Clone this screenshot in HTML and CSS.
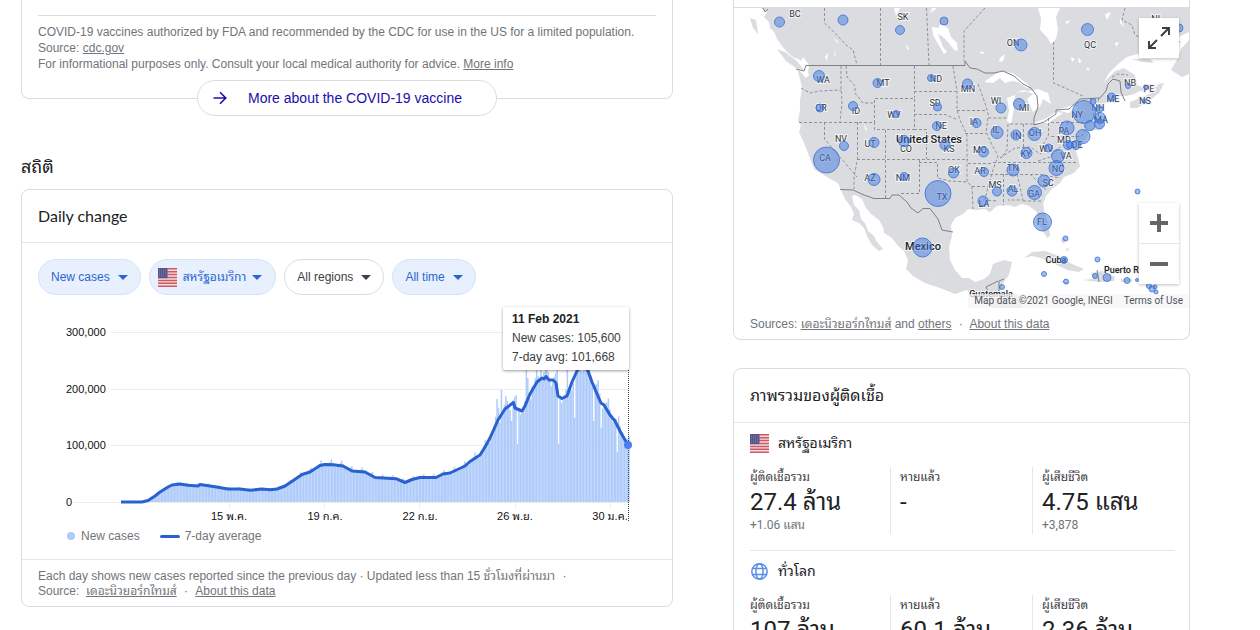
FILE: index.html
```html
<!DOCTYPE html>
<html lang="en">
<head>
<meta charset="utf-8">
<title>COVID-19 statistics</title>
<link rel="stylesheet" href="styles.css">
</head>
<body>
<svg class="defs" aria-hidden="true">
  <symbol id="flag" viewBox="0 0 19 19">
    <rect width="19" height="19" rx="1" fill="#f3dfe2"/>
    <path d="M0 .8h19M0 3.7h19M0 6.6h19M0 9.5h19M0 12.4h19M0 15.3h19M0 18.2h19" stroke="#cf5865" stroke-width="1.5"/>
    <rect width="9.500" height="10.200" fill="#56558c"/>
    <path d="M1 2h8M1 4h8M1 6h8M1 8h8" stroke="#8d8cb3" stroke-width=".7" stroke-dasharray="1 1"/>
  </symbol>
  <symbol id="caret" viewBox="0 0 10 5"><path d="M0 0h10L5 5z" fill="currentColor"/></symbol>
</svg>
<main class="page">
  <div class="column">
    <section class="card card-cut vaccine">
      <p class="notice">COVID-19 vaccines authorized by FDA and recommended by the CDC for use in the US for a limited population.<br>
      Source: <a href="#">cdc.gov</a><br>
      For informational purposes only. Consult your local medical authority for advice. <a href="#">More info</a></p>
      <div class="more-wrap">
        <a class="more" href="#">
          <svg width="14" height="14" viewBox="0 0 14 14" fill="none" stroke="#1a0dab" stroke-width="1.600"><path d="M.5 7h12M7 1.200 12.800 7 7 12.800"/></svg>
          <span>More about the COVID-19 vaccine</span>
        </a>
      </div>
    </section>

    <h2 class="heading">สถิติ</h2>

    <section class="card">
      <h3 class="card-title latin">Daily change</h3>
      <div class="chips">
        <button class="chip active">New cases<svg class="caret"><use href="#caret"/></svg></button>
        <button class="chip active with-flag"><svg class="flag"><use href="#flag"/></svg>สหรัฐอเมริกา<svg class="caret"><use href="#caret"/></svg></button>
        <button class="chip">All regions<svg class="caret"><use href="#caret"/></svg></button>
        <button class="chip active">All time<svg class="caret"><use href="#caret"/></svg></button>
      </div>
      <div class="chart">
        <svg class="chart-svg" viewBox="22 295 650 231" role="img" aria-label="New cases per day">
          <g stroke="#ececee">
            <path d="M111 332.500H628M111 389.500H628M111 445.500H628M73 502.500H628M229.500 503v5M324.500 503v5M419.500 503v5M515.500 503v5M610.500 503v5"/>
          </g>
          <g id="bars" fill="#aecbfa"></g>
          <path id="average" fill="none" stroke="#2962d0" stroke-width="3" stroke-linejoin="round"/>
          <g class="axis">
            <text x="66" y="336">300,000</text><text x="66" y="393">200,000</text><text x="66" y="449">100,000</text><text x="66" y="506">0</text>
            <g text-anchor="middle">
              <text x="229" y="520">15 พ.ค.</text><text x="325" y="520">19 ก.ค.</text><text x="420" y="520">22 ก.ย.</text><text x="515" y="520">26 พ.ย.</text><text x="610" y="520">30 ม.ค.</text>
            </g>
          </g>
          <path d="M628.500 370V522" stroke="#3c4043" stroke-dasharray="1 1"/>
          <circle cx="628" cy="445" r="4" fill="#4a80ee"/>
        </svg>
        <div class="tooltip"><b>11 Feb 2021</b><span>New cases: 105,600</span><span>7-day avg: 101,668</span></div>
      </div>
      <div class="legend">
        <span class="legend-item"><i class="dot"></i>New cases</span>
        <span class="legend-item"><i class="dash"></i>7-day average</span>
      </div>
      <p class="card-foot">Each day shows new cases reported since the previous day · Updated less than 15 ชั่วโมงที่ผ่านมา <span class="sep">·</span><br>
      Source: &nbsp;<a href="#">เดอะนิวยอร์กไทมส์</a> <span class="sep">·</span> <a href="#">About this data</a></p>
    </section>
  </div>

  <div class="column">
    <section class="card card-cut">
      <div class="map">
        <svg class="map-svg" viewBox="734 8 455 300" role="img" aria-label="Cases by region">
          <g fill="#dadce0">
            <path d="M761 8 767 12 764 17 769 22 770 28 774 32 777 39 782 46 787 52 793 57 800 60 806 66 809 75 806 78 799 70 797 68 800 79 802 88 800 100 800 110 798 121 801 125 799 132 804 143 808 153 814 169 822 174 832 180 838 183 841 190 845 199 851 207 854 214 852 220 859 223 864 228 868 238 872 245 879 251 883 249 877 242 874 236 868 231 865 223 861 219 859 210 854 205 852 196 855 195 862 199 866 208 871 214 879 220 883 227 884 233 892 238 898 246 904 251 908 260 906 269 913 276 925 283 940 288 955 294 967 290 975 299 984 303 994 308H1022L1021 297 1012 293 1000 292 1003 283 1009 275 1012 262 1004 260 993 264 990 274 984 279 975 282 969 278 962 278 955 270 950 260 949 247 952 236 951 225 955 218 963 214 968 209 976 210 985 209 990 212 997 206 1008 205 1015 207 1022 204 1029 206 1037 212 1038 222 1043 231 1047 238 1050 236 1049 225 1045 214 1043 204 1046 196 1052 189 1060 183 1064 177 1074 173 1080 166 1078 158 1076 151 1079 145 1086 140 1090 131 1102 129 1104 123 1099 118 1099 110 1103 104 1112 101 1119 96 1127 96 1134 94 1140 91 1146 92 1142 87 1137 85 1135 75 1124 68 1115 71 1104 82 1109 73 1118 64 1127 57 1137 54 1148 55 1157 51 1168 42 1189 32V8z"/>
            <path d="M750 18 756 20 758 34 753 28zM777 49 785 52 797 61 804 70 796 68 786 61zM1130 102 1140 98 1149 94 1155 92 1158 84 1164 83 1159 93 1149 101 1137 108 1130 108zM1152 86 1162 88 1159 91zM1171 70 1178 58 1181 49 1189 40V74L1182 77zM1131 59 1150 59 1154 63 1143 62zM1024 258 1032 252 1045 251 1059 256 1072 264 1084 269 1079 272 1067 270 1053 263 1041 258 1032 256zM1060 281 1070 282 1068 285zM1083 280 1093 279 1091 273 1102 271 1115 277 1114 281 1099 282zM1121 279h11v3h-11zM1062 238 1066 239 1064 244 1061 241zM1066 248 1069 249 1067 252z"/>
          </g>
          <g fill="#fff">
            <path d="M1038 8 1041 18 1040 30 1047 37 1051 44 1056 39 1058 29 1056 17 1060 8z"/>
            <path d="M984 82 991 77 1000 71 1013 73 1022 80 1030 86 1027 88 1018 82 1012 81 1005 83 1000 78 993 83zM1007 98 1015 95 1014 109 1011 124 1007 121 1009 110zM1015 93 1024 90 1033 94 1027 99 1033 112 1040 107 1043 99 1051 104 1048 93 1038 89 1030 91zM1033 123 1045 119 1056 112 1063 113 1048 123zM1057 110 1073 105 1078 108 1068 113z"/>
            <path d="M932 27 938 28 941 24 948 28 951 37 957 43 958 51 954 50 949 43 943 37 938 34 943 47 947 52 944 54 937 42 933 35zM894 8h6l-4 8zM906 44 910 50 907 49zM834 38 839 43 836 42zM825 57 828 53 827 61zM834 49 836 56 835 57zM1000 58 1005 54 1003 61 999 62zM980 51l5 2-4 1zM1065 22l6-2-4 4zM1078 57l4 5-3 1zM1105 14l6-2-4 8zM1115 43l4-1-3 5zM1086 67l4 2-2 2zM1071 57l4 2-3 3zM1120 18l4 9-4-4zM930 13l7-5h-5zM864 124l4 7-3-2zM928 279l9 2-6-1zM803 57 809 65 808 73 801 62z"/>
          </g>
          <g fill="none" stroke="#8f9296" stroke-dasharray="3 2">
            <path d="M824.500 8V23L838 36 846 45 853 50 857 65M880.500 8V65M926.500 8 929 65M985 8 964 31V61M841 66V85L842 103 840 122M801 88 810 93 820 91 841 90M799 122.500H874.500V98.500H914.500V129.500H874.500V122M846 66 847 77 855 86V93L863 103H874M914.500 66V98M914 91.500H956M914 114.500H945L958 120M914 129.500H926.500V159M824.500 122V139L857 177M857.500 122V159L854 177 854 189M857 159.500H968M885.500 130V198M919.500 159V193.500H899M919 162.500H937.500V178L950 181 968 182M926 136.500H962M953 66 957 91V110L960 120 967 135V182L972 186 973 209M957 110.500H986M965 133.500H986M978 84 981 92 986 106 989 118H1008M988 118 986 132 992 145 998 156 993 170 988 187 985 200 997 201M1008 124 1007 150 1001 158M1023.500 124V147M1010 124H1035M1048.500 118V135L1040 150M1051 122.500H1083L1086 130 1081 136.500H1049M968 163.500H993M972 186.500H988M993 162.500H1078M990 174.500H1040L1060 178M1003.500 174V205M1017 174 1023 200H1008M1023 201H1043M1030 174 1046 190M1000 158 1015 148 1030 147 1040 154 1048 148 1062 140 1070 137M1038 161 1050 157 1060 147M1053.500 42V83L1065 88 1083 96M1098.500 98V116M1091 99 1094 118H1101M1125 8 1122 20 1132 25 1135 35 1145 40 1162 35 1180 42M1112 77 1118 74 1128 75"/>
          </g>
          <g fill="none" stroke="#7d8084">
            <path d="M763 8 765 12 768 9M796 69 804 71 806 65.500H965V61L970 68 977 69 985 73 994 73 1003 71 1014 76 1023 84 1031 88 1037 96 1038 107 1034 118 1034 125 1044 122 1056 114V110L1069 109 1080 99 1100 98 1106 91 1108 84 1113 79 1120 81 1121 92 1125 101M840 189.500 853 190 864 195 874 198.500H890L892 195H899L907 202 911 208 918 213 923 208.500H930L938 219 942 230 947 231 953 232M986 287 989 293H999V281L1004 279M986 287 998 281M1097 270 1099 282"/>
          </g>
          <g id="map-labels" class="map-labels"></g>
          <g id="bubbles" fill="#4279df" fill-opacity=".5" stroke="#3f74d8" stroke-opacity=".85"></g>
        </svg>
        <button class="map-btn expand" aria-label="Expand map">
          <svg width="22" height="22" viewBox="0 0 22 22" fill="none" stroke="#3c4043" stroke-width="2"><path d="M13 9 21 1M14 1h7v7M9 13 1 21M1 14v7h7"/></svg>
        </button>
        <div class="zoom">
          <button class="map-btn" aria-label="Zoom in"><svg width="18" height="18" viewBox="0 0 18 18"><path d="M0 9h18M9 0v18" stroke="#666" stroke-width="4"/></svg></button>
          <button class="map-btn" aria-label="Zoom out"><svg width="18" height="18" viewBox="0 0 18 18"><path d="M0 9h18" stroke="#666" stroke-width="4"/></svg></button>
        </div>
        <div class="credits"><span>Map data ©2021 Google, INEGI</span><a href="#">Terms of Use</a></div>
      </div>
      <p class="map-foot">Sources: <a href="#">เดอะนิวยอร์กไทมส์</a> and <a href="#">others</a> <span class="sep">·</span> <a href="#">About this data</a></p>
    </section>

    <section class="card overview">
      <h3 class="card-title">ภาพรวมของผู้ติดเชื้อ</h3>
      <div class="region">
        <h4 class="region-name"><svg class="flag"><use href="#flag"/></svg>สหรัฐอเมริกา</h4>
        <div class="stats">
          <div class="stat"><span>ผู้ติดเชื้อรวม</span><strong>27.4 ล้าน</strong><small>+1.06 แสน</small></div>
          <div class="stat"><span>หายแล้ว</span><strong>-</strong></div>
          <div class="stat"><span>ผู้เสียชีวิต</span><strong>4.75 แสน</strong><small>+3,878</small></div>
        </div>
      </div>
      <div class="region">
        <h4 class="region-name"><svg class="flag" viewBox="0 0 19 19" fill="none" stroke="#5a8df0" stroke-width="1.500"><circle cx="9.500" cy="9.500" r="7.700"/><ellipse cx="9.500" cy="9.500" rx="3.600" ry="7.700"/><path d="M2.500 6.500h14M2.500 12.500h14"/></svg>ทั่วโลก</h4>
        <div class="stats">
          <div class="stat"><span>ผู้ติดเชื้อรวม</span><strong>107 ล้าน</strong></div>
          <div class="stat"><span>หายแล้ว</span><strong>60.1 ล้าน</strong></div>
          <div class="stat"><span>ผู้เสียชีวิต</span><strong>2.36 ล้าน</strong></div>
        </div>
      </div>
    </section>
  </div>
</main>
<script src="app.js"></script>
</body>
</html>
```
FILE: styles.css
```css
* { box-sizing: border-box; }
html { overflow: hidden; }
body {
  margin: 0;
  background: #fff;
  color: #202124;
  font: 12px/16px "Liberation Sans", "Noto Sans Thai Looped", Waree, Loma, Garuda, "Noto Sans Thai", sans-serif;
}
h2, h3, h4, p { margin: 0; font-weight: 400; }
a { color: inherit; }
button { font: inherit; cursor: pointer; }
.defs { position: absolute; width: 0; height: 0; }

.page {
  display: grid;
  grid-template-columns: minmax(0, 652fr) minmax(0, 457fr);
  column-gap: 60px;
  padding: 0 70px 0 21px;
  height: 100vh;
}
.column { display: flex; flex-direction: column; }
.card { border: 1px solid #dadce0; border-radius: 8px; }
.card-cut { border-top: 0; border-radius: 0 0 8px 8px; }

.vaccine { position: relative; padding: 15px 16px 26px; }
.notice { border-top: 1px solid #dadce0; padding-top: 8px; color: #70757a; }
.more-wrap { position: absolute; left: 0; right: 0; bottom: -18px; display: flex; justify-content: center; }
.more {
  display: flex;
  align-items: center;
  gap: 21px;
  width: 300px;
  height: 36px;
  padding: 0 15px;
  border: 1px solid #dadce0;
  border-radius: 18px;
  background: #fff;
  color: #1a0dab;
  font-size: 14px;
  text-decoration: none;
}

.heading { margin: 56px 0 10px; font-size: 18px; line-height: 24px; }
.card-title {
  display: flex;
  align-items: center;
  height: 53px;
  padding: 0 16px;
  border-bottom: 1px solid #e4e6e9;
  font-size: 16px;
}
.latin { font-family: Lato, sans-serif; }

.chips { display: flex; gap: 8px; padding: 16px 16px 0; }
.chip {
  display: flex;
  align-items: center;
  gap: 8px;
  height: 36px;
  padding: 0 12px;
  border: 1px solid #dadce0;
  border-radius: 18px;
  background: #fff;
  color: #3c4043;
  white-space: nowrap;
}
.chip.active { background: #e8f0fe; border-color: #d2e3fc; color: #2a66d2; }
.chip.with-flag { padding: 0 13px 0 8px; gap: 6px; }
.caret { width: 10px; height: 5px; }
.flag { flex: none; width: 19px; height: 19px; }

.chart { position: relative; }
.chart-svg, .map-svg { display: block; width: 100%; height: auto; }
.axis { font-size: 11px; fill: #111; }
.tooltip {
  position: absolute;
  right: 43px;
  top: 12px;
  display: flex;
  flex-direction: column;
  width: 126px;
  height: 63px;
  padding: 3px 9px;
  background: #fff;
  border-radius: 2px;
  box-shadow: 0 1px 3px rgba(0, 0, 0, .4);
  color: #3c4043;
  line-height: 19px;
  white-space: nowrap;
}
.tooltip b { color: #202124; }
.legend { display: flex; gap: 20px; padding: 0 44px; line-height: 20px; color: #70757a; }
.legend-item { display: flex; align-items: center; gap: 5px; }
.dot { width: 8px; height: 8px; margin: 0 1px; border-radius: 50%; background: #aecbfa; }
.dash { width: 20px; height: 3px; border-radius: 2px; background: #2962d0; }
.card-foot {
  margin-top: 13px;
  padding: 9px 16px 7px;
  border-top: 1px solid #e4e6e9;
  color: #70757a;
  line-height: 15px;
}
.sep { margin: 0 4px; }

.map { position: relative; margin-top: 7px; border-top: 1px solid #dadce0; overflow: hidden; }
.map-labels {
  font: 9px Roboto, sans-serif;
  fill: #303438;
  stroke: #f4f5f6;
  stroke-width: 2px;
  paint-order: stroke;
  text-anchor: middle;
}
.map-labels .country { font-size: 11px; font-weight: 500; fill: #202124; }
.map-labels .place { font-size: 9px; font-weight: 500; fill: #202124; }
.map-labels .island { font-size: 9px; font-weight: 500; fill: #202124; text-anchor: start; }
.map-btn {
  display: flex;
  align-items: center;
  justify-content: center;
  width: 40px;
  height: 40px;
  padding: 0;
  border: 0;
  background: #fff;
}
.expand { position: absolute; right: 10px; top: 10px; box-shadow: 0 1px 3px rgba(0, 0, 0, .25); }
.zoom { position: absolute; right: 10px; top: 195px; background: #fff; box-shadow: 0 1px 3px rgba(0, 0, 0, .25); }
.zoom .map-btn + .map-btn { border-top: 1px solid #e4e6e9; height: 41px; }
.credits {
  position: absolute;
  right: 0;
  bottom: 0;
  display: flex;
  gap: 11px;
  padding: 0 6px;
  background: rgba(245, 245, 245, .75);
  color: #50545a;
  font: 10px/14px Roboto, sans-serif;
}
.credits a { text-decoration: none; }
.map-foot { padding: 8px 16px 7px; color: #70757a; }

.overview { margin-top: 28px; }
.overview .card-title { height: 54px; }
.region { margin: 0 14px 0 16px; padding: 8px 0 16px; }
.region + .region { border-top: 1px solid #e4e6e9; }
.region-name { display: flex; align-items: center; gap: 9px; height: 24px; font-size: 14px; }
.stats { display: grid; grid-template-columns: 140fr 142fr 143fr; margin-top: 12px; min-height: 67px; }
.stat {
  display: flex;
  flex-direction: column;
  padding-left: 9px;
  border-left: 1px solid #e4e6e9;
  font-family: Roboto, "Noto Sans Thai Looped", Waree, Loma, Garuda, "Noto Sans Thai", sans-serif;
}
.stat:first-child { padding-left: 0; border-left: 0; }
.stat span { line-height: 20px; color: #3c4043; }
.stat strong { font-size: 24px; font-weight: 400; line-height: 30px; }
.stat small { font-size: 12px; line-height: 17px; color: #70757a; }
```
FILE: app.js
```js
const SVG = 'http://www.w3.org/2000/svg';
function add(parent, name, attrs, text) {
  const el = document.createElementNS(SVG, name);
  for (const key in attrs) el.setAttribute(key, attrs[key]);
  if (text) el.textContent = text;
  parent.appendChild(el);
}

// Seven-day average as chart coordinates
const average = [[121,502],[142,502],[148,500.5],[155,496],[160,492],[168,487],[172,485],[180,484],[188,485.3],[198,486],[200,484.6],[215,486.8],[228,489],[240,489],[250,490.3],[262,489],[270,489.8],[277,489],[285,486],[294,480],[302,474.500],[310,472],[320,465.500],[325,464.500],[333,464.700],[343,466],[352,471],[365,472],[375,477.500],[396,478.700],[405,482.500],[412,479.500],[420,477.500],[436,477.500],[443,474],[450,473],[465,466],[470,461.500],[480,455],[485,447],[490,438],[498,420],[505,409],[513.500,402.500],[515,408],[522,411],[525,406],[530,394],[537,382],[542,378],[544,379],[546,376.500],[549,380],[553,380],[556,383],[558,396],[562,398.500],[567,396],[572,382],[577,371],[583,362],[588,371],[592,382],[597,394],[601,403],[604,405],[610,415],[615,421],[620,431],[625,440],[628,445]];
document.getElementById('average').setAttribute('d', 'M' + average.map(p => p.join(' ')).join('L'));

function averageAt(x) {
  for (let i = 1; i < average.length; i++) {
    const [x0, y0] = average[i - 1], [x1, y1] = average[i];
    if (x <= x1) return y0 + (y1 - y0) * (x - x0) / (x1 - x0);
  }
  return 445;
}

const bars = document.getElementById('bars');
const week = [-0.02, 0.03, 0.07, 0.14, 0.05, 0.01, -0.05];
// Days whose count is far from the average: day index -> top of bar
const unusual = {
  256: 399, 257: 408, 259: 390, 263: 401, 266: 421, 270: 444, 276: 370, 277: 378, 280: 386, 283: 368,
  286: 370, 287: 380, 288: 372, 290: 364, 298: 444, 304: 370, 309: 418, 310: 368, 322: 421, 327: 428, 338: 452
};
for (let day = 0; day < 347; day++) {
  const x = 121 + day * 1.466;
  const avg = 502 - averageAt(x);
  const top = unusual[day] || 502 - avg * (1 + week[day % 7]);
  add(bars, 'rect', { x: x.toFixed(2), y: top.toFixed(1), width: 1.466, height: (502 - top).toFixed(1) });
}

const labels = document.getElementById('map-labels');
[['BC',795,17],['SK',903,20],['ON',1013,46],['QC',1090,48],['NL',1157,22],['WA',823,83],['MT',883,86],['ND',936,82],['MN',968,92],
 ['OR',821,111],['ID',856,114],['SD',935,106],['WY',894,118],['NE',941,129],['NV',841,142],['UT',870,147],['CO',906,152],['KS',949,152],
 ['CA',825,161],['AZ',870,181],['NM',903,181],['OK',954,173],['TX',942,200],['WI',996,104],['MI',1024,111],['IA',974,125],['IL',996,133],
 ['IN',1017,139],['OH',1035,136],['MO',980,153],['KY',1026,157],['WV',1046,152],['PA',1064,134],['NY',1077,118],['NH',1098,111],['ME',1113,102],
 ['MA',1101,123],['MD',1064,143],['DE',1077,148],['VA',1066,159],['NC',1058,172],['SC',1048,186],['TN',1013,171],['AR',980,174],['MS',995,188],
 ['AL',1013,192],['GA',1034,197],['LA',984,207],['FL',1042,225],['NB',1130,86],['PE',1149,92],['NS',1145,104]]
  .forEach(([name, x, y]) => add(labels, 'text', { x, y }, name));
add(labels, 'text', { x: 929, y: 143, class: 'country' }, 'United States');
add(labels, 'text', { x: 923, y: 250, class: 'country' }, 'Mexico');
add(labels, 'text', { x: 1056, y: 263, class: 'place' }, 'Cuba');
add(labels, 'text', { x: 1104, y: 273, class: 'island' }, 'Puerto Rico');
add(labels, 'text', { x: 991, y: 297, class: 'place' }, 'Guatemala');

const bubbles = document.getElementById('bubbles');
[[779.5,22,5],[843,20,5],[900,30,4.5],[944,21,4],[1021,45,6],[1087.5,29.5,6],[1179,28,4],[819,76,5.5],[877.5,83,4.5],[931,78,3.5],[967.5,84,5],
 [820,108,4],[853,106,4.5],[937.5,107,4],[896,114,3.5],[937,126,4.5],[844,146,4.5],[874,142.5,5],[904,141,5.5],[945,145,5],[826.5,160,13],
 [874,179.5,6],[904,176.500,4],[953.5,173,5],[938,193.5,13],[922.5,247.5,9.5],[1001,108,5],[1019,104,5.5],[976.5,123,4.5],[997,132.5,6],
 [1016,135,5],[1034.5,134,6.5],[983.5,152,5],[1026.5,153,5.5],[1048.5,148,4],[1067,128,7],[1084,112,11.5],[1093,101.5,3],[1099,109,3.5],
 [1111.5,97,4],[1100,118,5.5],[1099.5,124,5],[1090,125.5,5],[1083,136.5,7],[1076,145,4.5],[1068,145,4.5],[1070,145,3.5],[1058,156,6.5],
 [1056.5,168,7.5],[1044,181,6],[1013,170,6],[984,172,4.5],[997,191.5,4.5],[1012,191,5],[1034.5,192.5,7],[983,201,5],[1042.5,222,9],
 [1128,86,2.5],[1145.5,87,2],[1144,101,2],[1137.5,191.5,2.5],[1065.5,238.5,2.5],[1064,260,3.5],[1097.5,259.5,2.5],[1044,274,2.5],
 [1066,281.5,2.5],[1095,276,2.5],[1107,277.5,4],[1127,280.5,3],[1137,280,1.5],[1149,286,2.5],[1152,289,3],[1155,287,2],[1156,292,2],[1002,287,2.5]]
  .forEach(([cx, cy, r]) => add(bubbles, 'circle', { cx, cy, r }));
```
